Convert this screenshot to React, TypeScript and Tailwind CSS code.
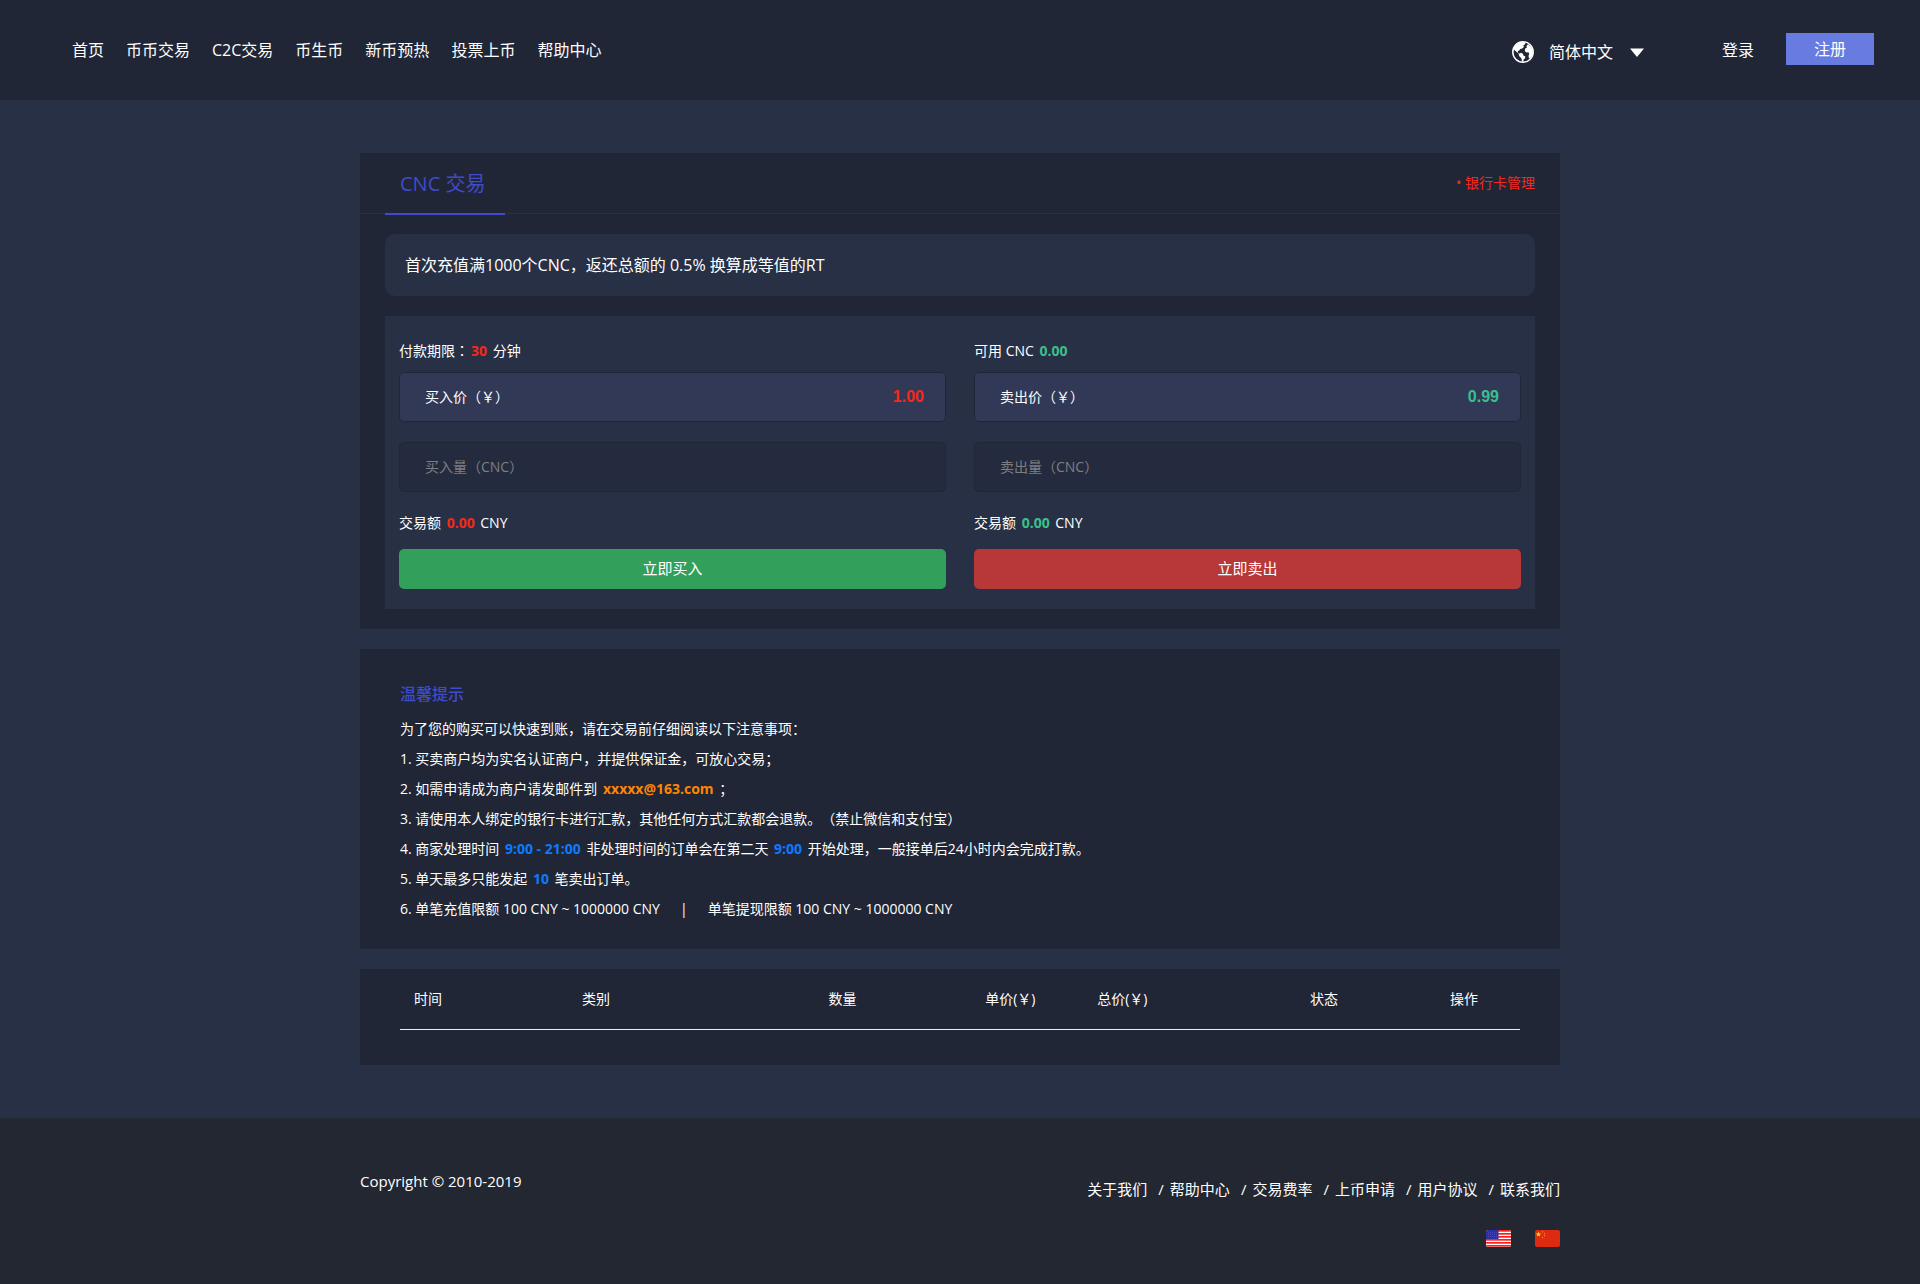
import { useState } from 'react';
import { clsx } from 'clsx';

const NAV_ITEMS = [
  '首页',
  '币币交易',
  'C2C交易',
  '币生币',
  '新币预热',
  '投票上币',
  '帮助中心',
];

const FOOTER_LINKS = [
  '关于我们',
  '帮助中心',
  '交易费率',
  '上币申请',
  '用户协议',
  '联系我们',
];

const COLUMNS = [
  { title: '时间', width: 'w-[15%]' },
  { title: '类别', width: 'w-[22%]' },
  { title: '数量', width: 'w-[14%]' },
  { title: '单价(￥)', width: 'w-[10%]' },
  { title: '总价(￥)', width: 'w-[19%]' },
  { title: '状态', width: 'w-1/8' },
  { title: '操作', width: '' },
];

function GlobeIcon() {
  return (
    <svg viewBox="0 0 22 22" className="h-[22px] w-[22px]" aria-hidden="true">
      <circle cx="11" cy="11" r="10.200" fill="none" stroke="#fff" strokeWidth="1.500" />
      <path
        fill="#fff"
        d="M1.500 8C2.800 4 6.500 1 11 1l2.800.4-1 2.200-1.500 1 .6 1.500-1.600 1.300-2 .5L7.200 9.500l-1.500.8.4 1.700 1.600.6 1.600-.8 1.700 1.300.4 1.500 2 1-.5 1.900-1.500 1.300.2 2h-1.500l-.8-3.600-2-2-.8-2.600L3.400 10z"
      />
      <path
        fill="#fff"
        d="M16 3.200 19.200 6l1.500 3.500.2 2.500-.9 3-2.200 2.600-.9-.4-.4-2.400.8-2-1-1.500-2 .2-1.500-1.600.4-2.300 1.800-1.100-.6-1.500z"
      />
    </svg>
  );
}

function UsFlag() {
  return (
    <svg viewBox="0 0 25 17" className="h-[17px] w-[25px] rounded-xs" aria-hidden="true">
      <rect width="25" height="17" fill="#fff" />
      {[0, 3, 6, 9, 12, 15].map((y) => (
        <rect key={y} y={y} width="25" height="1.700" fill="#fb2020" />
      ))}
      <rect width="12.500" height="9" fill="#2d2fa8" />
      {[2, 4, 6].map((y) =>
        [2, 4, 6, 8, 10].map((x) => (
          <rect key={`${x}-${y}`} x={x} y={y} width="0.800" height="0.800" fill="#5557bd" />
        ))
      )}
    </svg>
  );
}

function CnFlag() {
  return (
    <svg viewBox="0 0 25 17" className="h-[17px] w-[25px] rounded-xs" aria-hidden="true">
      <rect width="25" height="17" fill="#df2a12" />
      <path
        fill="#ffee00"
        d="M3.500 1.800l.7 1.700 1.900.1-1.400 1.200.4 1.800-1.600-1-1.600 1 .4-1.800L.9 3.600l1.900-.1z"
      />
      <g fill="#f08a1a">
        <circle cx="7.500" cy="1.800" r="0.700" />
        <circle cx="9.500" cy="3.500" r="0.700" />
        <circle cx="9.500" cy="5.800" r="0.700" />
        <circle cx="7.500" cy="7.500" r="0.700" />
      </g>
    </svg>
  );
}

interface MarkProps {
  color: string;
  children: React.ReactNode;
}

function Mark({ color, children }: MarkProps) {
  return <b className={clsx('mx-0.5', color)}>{children}</b>;
}

function Header() {
  return (
    <header className="flex h-[100px] items-center justify-between bg-[#202636] pr-[46px] pl-18">
      <nav className="flex gap-[22px]">
        {NAV_ITEMS.map((item) => (
          <a key={item} href="#" className="whitespace-nowrap">
            {item}
          </a>
        ))}
      </nav>
      <div className="flex items-center">
        <div className="flex items-center pt-1">
          <GlobeIcon />
          <select
            aria-label="语言"
            className="ml-[15px] w-[81px] appearance-none bg-transparent outline-none"
          >
            <option>简体中文</option>
            <option>English</option>
          </select>
          <svg viewBox="0 0 14 9" className="h-[9px] w-[14px]" aria-hidden="true">
            <path d="M0 0.500h14L7 9z" fill="#fff" />
          </svg>
        </div>
        <a href="#" className="ml-[78px]">
          登录
        </a>
        <a
          href="#"
          className="mb-0.5 ml-8 h-8 w-[88px] bg-[#677be1] text-center leading-8"
        >
          注册
        </a>
      </div>
    </header>
  );
}

interface TradeColumnProps {
  side: 'buy' | 'sell';
  price: string;
  hint: React.ReactNode;
}

function TradeColumn({ side, price, hint }: TradeColumnProps) {
  const [amount, setAmount] = useState('');
  const isBuy = side === 'buy';
  const action = isBuy ? '买入' : '卖出';
  const accent = isBuy ? 'text-[#f5291a]' : 'text-[#3cc08b]';
  const total = (Number(amount) * Number(price) || 0).toFixed(2);

  return (
    <form
      className="flex-1 px-3.5 pt-5 pb-5 text-sm"
      onSubmit={(e) => e.preventDefault()}
    >
      <p className="leading-[30px]">{hint}</p>
      <div className="mt-1.5 flex h-[50px] items-center justify-between rounded-[5px] border border-[#202636] bg-[#313957] pr-[21px] pl-[25px]">
        <label htmlFor={`${side}-price`} className="whitespace-nowrap">
          {action}价（￥）
        </label>
        <input
          id={`${side}-price`}
          readOnly
          value={price}
          className={clsx(
            'w-20 bg-transparent text-right font-["Liberation_Sans",sans-serif] text-base font-bold outline-none',
            accent
          )}
        />
      </div>
      <input
        type="text"
        aria-label={`${action}量（CNC）`}
        placeholder={`${action}量（CNC）`}
        value={amount}
        onChange={(e) => setAmount(e.target.value)}
        className="mt-5 block h-[50px] w-full rounded-[5px] border border-[#202636] bg-[#242b3f] px-[25px] pb-0.5 outline-none placeholder:text-[#7f7f7f]"
      />
      <p className="mt-4 mb-[11px] leading-[30px]">
        交易额 <Mark color={accent}>{total}</Mark> CNY
      </p>
      <button
        type="submit"
        className={clsx(
          'block h-10 w-full rounded-[5px] text-[15px]',
          isBuy ? 'bg-[#329f5b]' : 'bg-[#b8383a]'
        )}
      >
        立即{action}
      </button>
    </form>
  );
}

function TradeCard() {
  return (
    <section className="bg-[#202636] pb-5">
      <div className="flex h-[61px] items-start justify-between border-b border-[#283046] px-[25px]">
        <h1 className="h-[62px] w-[120px] border-b-2 border-[#3f4bcc] pl-[15px] text-xl leading-[62px] text-[#3f4bcc]">
          CNC 交易
        </h1>
        <a href="#" className="text-sm leading-[60px] text-[#f5291a]">
          • 银行卡管理
        </a>
      </div>
      <div className="mx-[25px] mt-5 rounded-[10px] bg-[#283046] px-5 leading-[62px]">
        首次充值满1000个CNC，返还总额的 0.5% 换算成等值的RT
      </div>
      <div className="mx-[25px] mt-5 flex bg-[#283046]">
        <TradeColumn
          side="buy"
          price="1.00"
          hint={
            <>
              付款期限
              <span
                className='font-["Noto_Sans_CJK_TC",sans-serif] leading-none'
                lang="zh-TW"
              >
                ：
              </span>
              <Mark color="text-[#f5291a]">30</Mark> 分钟
            </>
          }
        />
        <TradeColumn
          side="sell"
          price="0.99"
          hint={
            <>
              可用 CNC <Mark color="text-[#3cc08b]">0.00</Mark>
            </>
          }
        />
      </div>
    </section>
  );
}

function Tips() {
  return (
    <section className="mt-5 bg-[#202636] px-10 pt-[30px] pb-[25px] text-sm leading-[30px]">
      <h2 className="mb-[5px] text-base leading-[30px] font-medium text-[#3f4bcc]">
        温馨提示
      </h2>
      <p>为了您的购买可以快速到账，请在交易前仔细阅读以下注意事项：</p>
      <p>1. 买卖商户均为实名认证商户，并提供保证金，可放心交易；</p>
      <p>
        2. 如需申请成为商户请发邮件到{' '}
        <Mark color="text-[#ff8500]">xxxxx@163.com</Mark> ；
      </p>
      <p>
        3. 请使用本人绑定的银行卡进行汇款，其他任何方式汇款都会退款。（禁止微信和支付宝）
      </p>
      <p>
        4. 商家处理时间 <Mark color="text-[#0d7bff]">9:00 - 21:00</Mark>{' '}
        非处理时间的订单会在第二天 <Mark color="text-[#0d7bff]">9:00</Mark>{' '}
        开始处理，一般接单后24小时内会完成打款。
      </p>
      <p>
        5. 单天最多只能发起 <Mark color="text-[#0d7bff]">10</Mark> 笔卖出订单。
      </p>
      <p>
        6. 单笔充值限额 100 CNY ~ 1000000 CNY
        <span className="mx-5">|</span>
        单笔提现限额 100 CNY ~ 1000000 CNY
      </p>
    </section>
  );
}

function Orders() {
  return (
    <section className="mt-5 bg-[#202636] px-10 pb-[35px]">
      <table className="w-full table-fixed text-left text-sm">
        <thead>
          <tr className="h-[60px] border-b border-[#e8f0f4]">
            {COLUMNS.map((col) => (
              <th key={col.title} className={clsx('pl-3.5 font-normal', col.width)}>
                {col.title}
              </th>
            ))}
          </tr>
        </thead>
        <tbody />
      </table>
    </section>
  );
}

function Footer() {
  return (
    <footer className="flex-1 bg-[#232731] text-[15px]">
      <div className="mx-auto flex max-w-[1200px] items-start justify-between pt-[51px]">
        <p className="leading-6">Copyright © 2010-2019</p>
        <div className="flex flex-col items-end pt-2">
          <ul className="flex leading-6">
            {FOOTER_LINKS.map((link, i) => (
              <li key={link} className="flex">
                {i > 0 && <span className="mr-1.5 ml-[11px]">/</span>}
                <a href="#">{link}</a>
              </li>
            ))}
          </ul>
          <div className="mt-[29px] flex gap-6">
            <button type="button" aria-label="English">
              <UsFlag />
            </button>
            <button type="button" aria-label="简体中文">
              <CnFlag />
            </button>
          </div>
        </div>
      </div>
    </footer>
  );
}

export default function App() {
  return (
    <div className='flex min-h-screen flex-col bg-[#283046] font-["Open_Sans","Noto_Sans_CJK_SC",sans-serif] text-base text-white [text-spacing-trim:space-all]'>
      <Header />
      <main className="mx-auto w-full max-w-[1200px] pt-[53px] pb-[53px]">
        <TradeCard />
        <Tips />
        <Orders />
      </main>
      <Footer />
    </div>
  );
}
